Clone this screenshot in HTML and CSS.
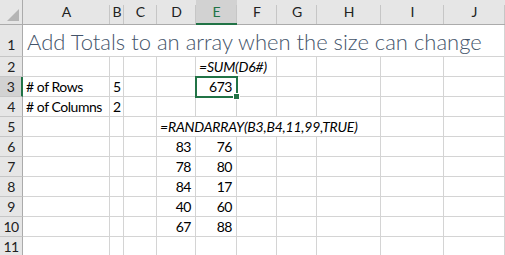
FILE: index.html
```html
<!DOCTYPE html>
<html lang="en">
<head>
	<meta charset="UTF-8">
	<title>Add Totals</title>
	<link rel="stylesheet" href="styles.css">
</head>
<body>
	<div class="sheet">
		<!-- header row -->
		<div class="corner"></div>
		<div class="colhead">A</div>
		<div class="colhead">B</div>
		<div class="colhead">C</div>
		<div class="colhead">D</div>
		<div class="colhead sel">E</div>
		<div class="colhead">F</div>
		<div class="colhead">G</div>
		<div class="colhead">H</div>
		<div class="colhead">I</div>
		<div class="colhead">J</div>

		<!-- 1 -->
		<div class="rowhead tall">1</div>
		<div class="cell title span10">Add Totals to an array when the size can change</div>

		<!-- 2 -->
		<div class="rowhead">2</div>
		<div class="cell"></div><div class="cell"></div><div class="cell"></div><div class="cell"></div>
		<div class="cell formula span2">=SUM(D6#)</div>
		<div class="cell"></div><div class="cell"></div><div class="cell"></div><div class="cell"></div>

		<!-- 3 -->
		<div class="rowhead sel">3</div>
		<div class="cell">#&nbsp;of Rows</div>
		<div class="cell">5</div>
		<div class="cell"></div><div class="cell"></div>
		<div class="cell num active">673<span class="handle"></span></div>
		<div class="cell"></div><div class="cell"></div><div class="cell"></div><div class="cell"></div><div class="cell"></div>

		<!-- 4 -->
		<div class="rowhead">4</div>
		<div class="cell">#&nbsp;of Columns</div>
		<div class="cell">2</div>
		<div class="cell"></div><div class="cell"></div><div class="cell"></div>
		<div class="cell"></div><div class="cell"></div><div class="cell"></div><div class="cell"></div><div class="cell"></div>

		<!-- 5 -->
		<div class="rowhead">5</div>
		<div class="cell"></div><div class="cell"></div><div class="cell"></div>
		<div class="cell formula span5">=RANDARRAY(B3,B4,11,99,TRUE)</div>
		<div class="cell"></div><div class="cell"></div>

		<!-- 6 -->
		<div class="rowhead">6</div>
		<div class="cell"></div><div class="cell"></div><div class="cell"></div>
		<div class="cell num">83</div><div class="cell num">76</div>
		<div class="cell"></div><div class="cell"></div><div class="cell"></div><div class="cell"></div><div class="cell"></div>

		<!-- 7 -->
		<div class="rowhead">7</div>
		<div class="cell"></div><div class="cell"></div><div class="cell"></div>
		<div class="cell num">78</div><div class="cell num">80</div>
		<div class="cell"></div><div class="cell"></div><div class="cell"></div><div class="cell"></div><div class="cell"></div>

		<!-- 8 -->
		<div class="rowhead">8</div>
		<div class="cell"></div><div class="cell"></div><div class="cell"></div>
		<div class="cell num">84</div><div class="cell num">17</div>
		<div class="cell"></div><div class="cell"></div><div class="cell"></div><div class="cell"></div><div class="cell"></div>

		<!-- 9 -->
		<div class="rowhead">9</div>
		<div class="cell"></div><div class="cell"></div><div class="cell"></div>
		<div class="cell num">40</div><div class="cell num">60</div>
		<div class="cell"></div><div class="cell"></div><div class="cell"></div><div class="cell"></div><div class="cell"></div>

		<!-- 10 -->
		<div class="rowhead">10</div>
		<div class="cell"></div><div class="cell"></div><div class="cell"></div>
		<div class="cell num">67</div><div class="cell num">88</div>
		<div class="cell"></div><div class="cell"></div><div class="cell"></div><div class="cell"></div><div class="cell"></div>

		<!-- 11 -->
		<div class="rowhead">11</div>
		<div class="cell"></div><div class="cell"></div><div class="cell"></div><div class="cell"></div><div class="cell"></div>
		<div class="cell"></div><div class="cell"></div><div class="cell"></div><div class="cell"></div><div class="cell"></div>
	</div>
</body>
</html>
```

FILE: styles.css
```css
html, body{margin: 0; padding: 0; background: #fff; overflow: hidden;}
body{font-family: Lato, "Open Sans", sans-serif; font-size: 15px; color: #000;}
.sheet{display: grid; grid-template-columns: 23px 87px 14px 33px 39px 41px 40px 40px 64px 63px 61px; grid-template-rows: 25px 32px repeat(10, 20px); width: 505px;}

.corner{background: #e6e6e6; border-right: 1px solid #ababab; border-bottom: 1px solid #ababab; box-sizing: border-box; position: relative;}
.corner::after{content: ""; position: absolute; right: 3px; bottom: 3px; width: 12px; height: 12px; background: #b4b4b4; clip-path: polygon(100% 0, 100% 100%, 0 100%);}

.colhead{background: #e6e6e6; border-bottom: 1px solid #ababab; box-sizing: border-box; text-align: center; line-height: 24px; font-size: 14px; color: #222; position: relative;}
.colhead::after{content: ""; position: absolute; right: 0; top: 5px; bottom: 0; width: 1px; background: #c6c6c6;}
.colhead.sel{background: #d2d2d2; color: #217346; border-bottom: 2px solid #217346; line-height: 23px;}

.rowhead{background: #e6e6e6; border-right: 1px solid #ababab; border-bottom: 1px solid #c6c6c6; box-sizing: border-box; text-align: center; line-height: 20px; font-size: 14px; letter-spacing: -0.5px; color: #222;}
.rowhead.tall{line-height: 40px;}
.rowhead.sel{background: #d2d2d2; border-right: 2px solid #217346;}

.cell{border-right: 1px solid #d4d4d4; border-bottom: 1px solid #d4d4d4; box-sizing: border-box; padding: 0 3px; font-size: 14px; letter-spacing: -0.45px; line-height: 19px; white-space: nowrap; position: relative;}
.num{text-align: right; padding-right: 4px;}
.formula{font-style: italic; letter-spacing: -0.2px;}
.span2{grid-column: span 2;}
.span5{grid-column: span 5;}
.span10{grid-column: span 10;}

.title{font-size: 22px; letter-spacing: 0; font-weight: 300; color: #44546a; line-height: 34px; padding-left: 4px;}

.active{outline: 2px solid #217346; outline-offset: -1px; z-index: 1;}
.handle{position: absolute; right: -4px; bottom: -4px; width: 5px; height: 5px; background: #217346; border: 1px solid #fff;}
```
